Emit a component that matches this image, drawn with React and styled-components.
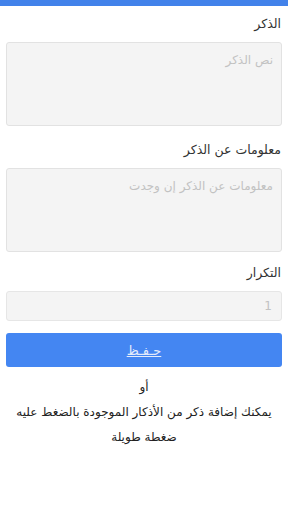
import React from "react";
import styled, { createGlobalStyle } from "styled-components";

const Global = createGlobalStyle`
  html, body { margin: 0; padding: 0; background: #fff; }
  body { font-family: "DejaVu Sans", "Noto Sans", sans-serif; }
  * { box-sizing: border-box; }
`;

const TopBar = styled.div`
  height: 6px;
  background: #4282ea;
`;

const Form = styled.form`
  direction: rtl;
  padding: 0 6px;
  display: flex;
  flex-direction: column;
`;

const Label = styled.label`
  display: block;
  font-size: 12.5px;
  line-height: 18px;
  color: #333;
  padding-right: 1px;
  margin-top: ${(p) => p.$top}px;
  margin-bottom: 9px;
`;

const Area = styled.textarea`
  display: block;
  width: 100%;
  height: 84px;
  resize: none;
  border: 1px solid #e2e2e2;
  border-radius: 3px;
  background: #f4f4f4;
  padding: 8px 8px;
  font-family: inherit;
  font-size: 12px;
  line-height: 18px;
  color: #333;
  direction: rtl;
  &::placeholder { color: #c2c2c2; }
`;

const Input = styled.input`
  display: block;
  width: 100%;
  height: 30px;
  border: 1px solid #e6e6e6;
  border-radius: 3px;
  background: #f4f4f4;
  padding: 0 9px;
  font-family: inherit;
  font-size: 12px;
  direction: rtl;
  &::placeholder { color: #c2c2c2; }
`;

const SaveButton = styled.button`
  margin-top: 12px;
  height: 34px;
  width: 100%;
  border: none;
  border-radius: 3px;
  background: #4486f2;
  color: #e4ecfb;
  font-family: inherit;
  font-size: 13px;
  text-decoration: underline;
  letter-spacing: 1px;
`;

const Note = styled.div`
  direction: rtl;
  text-align: center;
  color: #222;
  font-size: 12px;
  line-height: 25px;
  padding: 0 10px;
  margin-top: ${(p) => p.$top || 0}px;
`;

export default function App() {
  return (
    <>
      <Global />
      <TopBar />
      <Form onSubmit={(e) => e.preventDefault()}>
        <Label $top={9}>الذكر</Label>
        <Area placeholder="نص الذكر" />
        <Label $top={15}>معلومات عن الذكر</Label>
        <Area placeholder="معلومات عن الذكر إن وجدت" />
        <Label $top={12}>التكرار</Label>
        <Input placeholder="1" />
        <SaveButton type="submit">حـفـظ</SaveButton>
      </Form>
      <Note $top={8}>أو</Note>
      <Note>يمكنك إضافة ذكر من الأذكار الموجودة بالضغط عليه ضغطة طويلة</Note>
    </>
  );
}
